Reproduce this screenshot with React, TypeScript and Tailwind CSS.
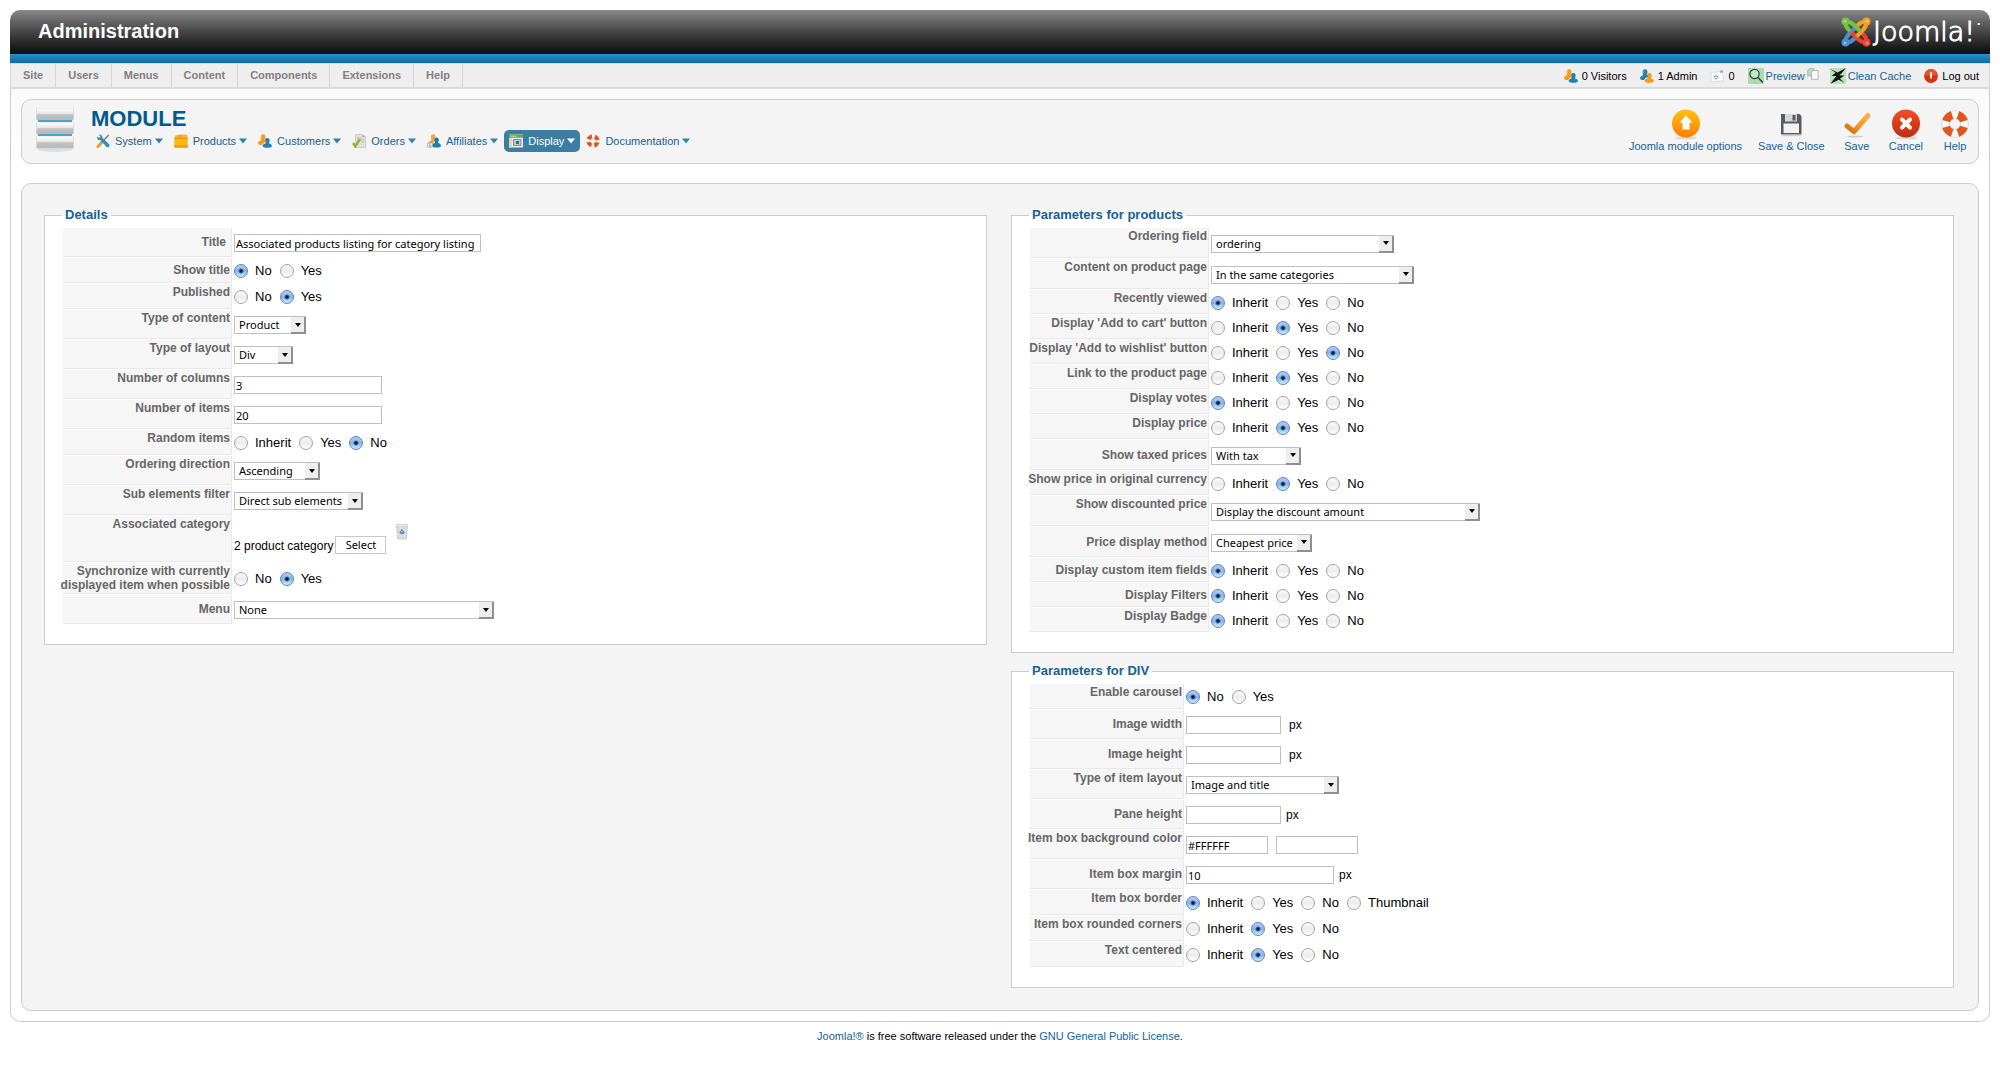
import React from 'react'
import clsx from 'clsx'

// --- Types ---
type Control =
  | { kind: 'radio'; options: string[]; value: string }
  | { kind: 'select'; value: string; width: string }
  | { kind: 'text'; value: string; width: string; unit?: string; wideUnit?: boolean }
  | { kind: 'colors'; value: string }
  | { kind: 'category' }

interface Field {
  label: string
  row: string
  control: Control
  middle?: boolean
}

interface PanelProps {
  title: string
  labelWidth: string
  fields: Field[]
}

const YES_NO = ['No', 'Yes']
const INHERIT = ['Inherit', 'Yes', 'No']

const radio = (value: string, options: string[] = INHERIT): Control => ({ kind: 'radio', options, value })
const select = (value: string, width: string): Control => ({ kind: 'select', value, width })

// --- Data ---
const DETAILS: Field[] = [
  { label: 'Title', row: 'h-[30px]', middle: true, control: { kind: 'text', value: 'Associated products listing for category listing', width: 'w-[247px]' } },
  { label: 'Show title', row: 'h-[26px]', middle: true, control: radio('No', YES_NO) },
  { label: 'Published', row: 'h-[26px]', control: radio('Yes', YES_NO) },
  { label: 'Type of content', row: 'h-[30px]', control: select('Product', 'w-[72px]') },
  { label: 'Type of layout', row: 'h-[30px]', control: select('Div', 'w-[59px]') },
  { label: 'Number of columns', row: 'h-[30px]', control: { kind: 'text', value: '3', width: 'w-[148px]' } },
  { label: 'Number of items', row: 'h-[30px]', control: { kind: 'text', value: '20', width: 'w-[148px]' } },
  { label: 'Random items', row: 'h-[26px]', control: radio('No') },
  { label: 'Ordering direction', row: 'h-[30px]', control: select('Ascending', 'w-[86px]') },
  { label: 'Sub elements filter', row: 'h-[30px]', control: select('Direct sub elements', 'w-[129px]') },
  { label: 'Associated category', row: 'h-[47px]', control: { kind: 'category' } },
  { label: 'Synchronize with currently\ndisplayed item when possible', row: 'h-8', middle: true, control: radio('Yes', YES_NO) },
  { label: 'Menu', row: 'h-[30px]', middle: true, control: select('None', 'w-[260px]') },
]

const PRODUCTS: Field[] = [
  { label: 'Ordering field', row: 'h-[31px]', control: select('ordering', 'w-[183px]') },
  { label: 'Content on product page', row: 'h-[31px]', control: select('In the same categories', 'w-[203px]') },
  { label: 'Recently viewed', row: 'h-[25px]', control: radio('Inherit') },
  { label: "Display 'Add to cart' button", row: 'h-[25px]', control: radio('Yes') },
  { label: "Display 'Add to wishlist' button", row: 'h-[25px]', control: radio('No') },
  { label: 'Link to the product page', row: 'h-[25px]', control: radio('Yes') },
  { label: 'Display votes', row: 'h-[25px]', control: radio('Inherit') },
  { label: 'Display price', row: 'h-[25px]', control: radio('Yes') },
  { label: 'Show taxed prices', row: 'h-[31px]', middle: true, control: select('With tax', 'w-[90px]') },
  { label: 'Show price in original currency', row: 'h-[25px]', control: radio('Yes') },
  { label: 'Show discounted price', row: 'h-[31px]', control: select('Display the discount amount', 'w-[269px]') },
  { label: 'Price display method', row: 'h-[31px]', middle: true, control: select('Cheapest price', 'w-[101px]') },
  { label: 'Display custom item fields', row: 'h-[25px]', middle: true, control: radio('Inherit') },
  { label: 'Display Filters', row: 'h-[25px]', middle: true, control: radio('Inherit') },
  { label: 'Display Badge', row: 'h-[25px]', control: radio('Inherit') },
]

const DIV_PARAMS: Field[] = [
  { label: 'Enable carousel', row: 'h-[26px]', control: radio('No', YES_NO) },
  { label: 'Image width', row: 'h-[30px]', middle: true, control: { kind: 'text', value: '', width: 'w-[95px]', unit: 'px', wideUnit: true } },
  { label: 'Image height', row: 'h-[30px]', middle: true, control: { kind: 'text', value: '', width: 'w-[95px]', unit: 'px', wideUnit: true } },
  { label: 'Type of item layout', row: 'h-[30px]', control: select('Image and title', 'w-[153px]') },
  { label: 'Pane height', row: 'h-[30px]', middle: true, control: { kind: 'text', value: '', width: 'w-[95px]', unit: 'px' } },
  { label: 'Item box background color', row: 'h-[30px]', control: { kind: 'colors', value: '#FFFFFF' } },
  { label: 'Item box margin', row: 'h-[30px]', middle: true, control: { kind: 'text', value: '10', width: 'w-[148px]', unit: 'px' } },
  { label: 'Item box border', row: 'h-[26px]', control: radio('Inherit', ['Inherit', 'Yes', 'No', 'Thumbnail']) },
  { label: 'Item box rounded corners', row: 'h-[26px]', control: radio('Yes') },
  { label: 'Text centered', row: 'h-[26px]', control: radio('Yes') },
]

// --- Icons ---
const UsersIcon = ({ back = '#1f83ad', front = '#f59a1c' }: { back?: string; front?: string }) => (
  <svg viewBox="0 0 14 14" className="size-[14px] shrink-0">
    <path d="M9.300 4c1.700 0 2.500 1.200 2.400 2.800-.1 1-.5 1.700-.8 2.200.1.900 3 .9 3 2.700 0 1.400-1.700 2-4.600 2s-4.600-.6-4.600-2c0-1.800 2.900-1.900 3-2.700-.3-.5-.7-1.200-.8-2.200C6.800 5.200 7.600 4 9.300 4z" fill={back} />
    <path d="M5 .2c1.800 0 2.600 1.200 2.500 2.900-.1 1.100-.5 1.800-.9 2.400.1.600.9.8 1.600 1.300C7.800 8.800 5 8.600 4.300 11 1.800 11.200 0 10.700 0 9.300c0-2.100 3.100-2.500 3.300-3.800-.4-.6-.7-1.300-.8-2.400C2.400 1.400 3.300.2 5 .2z" fill={front} />
    <path d="M4 1.300c-.8.6-.7 1.700-.4 2.500" stroke="#fff" strokeOpacity=".5" strokeWidth=".8" fill="none" />
  </svg>
)

const ToolsIcon = () => (
  <svg viewBox="0 0 14 14" className="size-[14px] shrink-0">
    <path d="M12.800 1L8.200 5.800" stroke="#777" strokeWidth="1.400" />
    <path d="M7.200 6.500L2 12.600" stroke="#f0992b" strokeWidth="3" strokeLinecap="round" />
    <path d="M1.200 2.400L3 4l1.500-1.600L3 .7C4.700.2 6.500 1.500 6.300 3.700l6.800 6.600c1.200 1.800-1 3.800-2.600 2.500L4.200 6C2.300 6.500.5 4.900 1.200 2.400z" fill="#2a8fc4" />
  </svg>
)

const BoxIcon = () => (
  <svg viewBox="0 0 14 14" className="size-[14px] shrink-0">
    <path d="M1 1.500L6 .5h6l1.500 1V5H.5z" fill="#f9b233" />
    <path d="M.3 4.200h13.400v9.500H.3z" fill="#fdb813" />
    <path d="M.3 11h13.400v2.700H.3z" fill="#f79d0c" />
    <path d="M.3 4.300h13.400M6 .8V4" stroke="#d98306" strokeWidth=".7" />
  </svg>
)

const OrdersIcon = () => (
  <svg viewBox="0 0 14 14" className="size-[14px] shrink-0">
    <path d="M3.500.5h7L13.500 3v10.500h-10z" fill="#e0e0e0" stroke="#b8b8b8" strokeWidth=".6" />
    <path d="M10.500.5V3h3z" fill="#aaa" />
    <path d="M5 4h5M5 6h7M9 8h3" stroke="#b0b0b0" strokeWidth=".7" />
    <path d="M1 9l2.200 3.500L8 5" fill="none" stroke="#84bd2e" strokeWidth="2.400" />
  </svg>
)

const AffiliatesIcon = () => (
  <svg viewBox="0 0 14 14" className="size-[14px] shrink-0">
    <path d="M6 .3c1.800 0 2.600 1.100 2.400 3-.3 1.700-.8 2-.6 2.700L5 10.500 2.500 8.500c0-2 2-2 1.900-3.300C3.600 3.200 3.800.3 6 .3z" fill="#f2a443" />
    <path d="M9.500 3.500c1.700 0 2.400 1.200 2.300 2.800-.1 1.100-.6 1.700-.7 2.300 0 .8 2.800.9 2.800 3.100 0 1.400-1.700 1.900-4.200 1.900-2.800 0-4.500-.5-4.500-1.900 0-2.200 2.800-2.300 2.800-3.100-.2-.6-.6-1.200-.7-2.300-.1-1.600.6-2.800 2.200-2.800z" fill="#1c7fa9" />
    <circle cx="3" cy="10.800" r="2.700" fill="#f5f5f5" stroke="#888" strokeWidth=".7" />
    <path d="M3 9v.8M3 10.300v2" stroke="#555" strokeWidth=".9" />
  </svg>
)

const DisplayIcon = () => (
  <svg viewBox="0 0 14 14" className="size-[14px] shrink-0">
    <path d="M0 .5h14v13H0z" fill="#f3ede2" />
    <path d="M0 .5h14v3.300H0z" fill="#5fae57" />
    <path d="M1.500 2.200h6" stroke="#d6efd2" strokeWidth=".8" />
    <path d="M0 4h3v9.500H0z" fill="#e6d3bd" />
    <path d="M4.500 5.500h7.500v6H4.500z" fill="#9ad3ea" stroke="#d9583a" strokeWidth=".8" />
    <path d="M7 7h3v3H7z" fill="#2f6d99" />
  </svg>
)

const LifeRing = ({ className }: { className: string }) => (
  <svg viewBox="0 0 28 28" className={className}>
    <circle cx="14" cy="14" r="9.500" fill="none" stroke="#fafafa" strokeWidth="8" />
    <circle cx="14" cy="14" r="13.400" fill="none" stroke="#d0d0d0" strokeWidth=".7" />
    <circle cx="14" cy="14" r="5.400" fill="none" stroke="#c4c4c4" strokeWidth=".7" />
    <circle
      cx="14"
      cy="14"
      r="9.400"
      fill="none"
      stroke="#e0561e"
      strokeWidth="8"
      pathLength="80"
      strokeDasharray="12 8"
      strokeDashoffset="-4"
    />
  </svg>
)

const ModuleIcon = () => (
  <svg viewBox="0 0 40 48" className="h-12 w-10 shrink-0">
    <defs>
      <linearGradient id="slab" x1="0" y1="0" x2="0" y2="1">
        <stop offset="0" stopColor="#ffffff" />
        <stop offset=".45" stopColor="#e9e9ea" />
        <stop offset=".55" stopColor="#c4c5c7" />
        <stop offset="1" stopColor="#b5b6b8" />
      </linearGradient>
    </defs>
    <ellipse cx="20" cy="41" rx="18" ry="3" fill="#dedede" />
    <path d="M3 10h34v22H3z" fill="#1a9ad6" />
    <rect x="1.500" y="0" width="37" height="12" rx="1" fill="url(#slab)" stroke="#c9c9c9" strokeWidth=".5" />
    <rect x="1.500" y="14" width="37" height="12" rx="1" fill="url(#slab)" stroke="#c9c9c9" strokeWidth=".5" />
    <rect x="1.500" y="28" width="37" height="12" rx="1" fill="url(#slab)" stroke="#c9c9c9" strokeWidth=".5" />
  </svg>
)

const MailIcon = () => (
  <svg viewBox="0 0 14 14" className="size-[14px] shrink-0">
    <path d="M1 3.500l11.500-1L13.500 12 1 12.800z" fill="#f7f9fa" stroke="#cdd3d6" strokeWidth=".6" />
    <path d="M10 1.300h3v2.500h-3z" fill="#8fb9d4" />
    <path d="M4 8c1-1.500 3-1.500 4 .2M4.500 9c1 1.200 2.500 1 3.500-.6" stroke="#4d8db5" fill="none" strokeWidth="1" />
  </svg>
)

const SearchIcon = () => (
  <svg viewBox="0 0 16 16" className="size-4 shrink-0">
    <rect width="16" height="16" rx="1" fill="#abdcb0" />
    <circle cx="6.500" cy="6" r="4.600" fill="#c4e6c8" stroke="#2f3d33" strokeWidth="1.200" />
    <path d="M10 9.500l4.800 5" stroke="#2f3d33" strokeWidth="1.500" />
  </svg>
)

const PagesIcon = () => (
  <svg viewBox="0 0 12 12" className="size-3 shrink-0 self-start">
    <path d="M.7 2.500L2.500.7h4.300v7H.7z" fill="#b9dcbf" stroke="#93a796" strokeWidth=".7" />
    <path d="M4.500 4.300l1.800-1.800h4.800v8.800H4.500z" fill="#fafafa" stroke="#9d9d9d" strokeWidth=".7" />
  </svg>
)

const BoltIcon = () => (
  <svg viewBox="0 0 16 16" className="size-4 shrink-0">
    <rect width="16" height="16" rx="1" fill="#b7e5b9" />
    <path d="M0 .8l7.500 3.700L15.800 0 11.500 5.500 9.300 7.300l5 .2-4.300 3.200 4.500 4-5.700-2.900L.5 15.800l4-5.600L6.500 8 1.500 8l4-3.300z" fill="#151515" />
  </svg>
)

const LogoutIcon = () => (
  <svg viewBox="0 0 14 14" className="size-[14px] shrink-0">
    <circle cx="7" cy="7" r="6.900" fill="#d6300f" />
    <path d="M1 6a6 6 0 0 1 12 0c-4 1.500-8 1.500-12 0z" fill="#e9532f" />
    <path d="M7 3.300v6.200" stroke="#fff" strokeWidth="1.800" />
  </svg>
)

const OptionsIcon = () => (
  <svg viewBox="0 0 32 30" className="h-[30px] w-8 overflow-visible">
    <defs>
      <linearGradient id="amber" x1="0" y1="0" x2="0" y2="1">
        <stop offset="0" stopColor="#ffc20e" />
        <stop offset="1" stopColor="#fd7e00" />
      </linearGradient>
    </defs>
    <ellipse cx="16" cy="29" rx="11" ry="1.300" fill="#d8d8d8" />
    <circle cx="16" cy="14.500" r="14" fill="url(#amber)" />
    <path d="M16 6.500l6.500 7h-3v7h-7v-7h-3z" fill="#fff" />
  </svg>
)

const FloppyIcon = () => (
  <svg viewBox="0 0 32 30" className="h-[30px] w-8 overflow-visible">
    <path d="M6 5h18.500l2 2v18.500H6z" fill="#5a5b5e" />
    <path d="M10 5h12v7.500H10z" fill="#d5d6d8" />
    <path d="M17.500 6h3v5.500h-3z" fill="#5a5b5e" />
    <path d="M8.500 14.500H24V24H8.500z" fill="#f2f2f2" />
    <path d="M7 26.500h19" stroke="#cfcfcf" strokeWidth="1.500" />
  </svg>
)

const CheckIcon = () => (
  <svg viewBox="0 0 32 30" className="h-[30px] w-8 overflow-visible">
    <defs>
      <linearGradient id="tick" x1="0" y1="1" x2="1" y2="0">
        <stop offset="0" stopColor="#c9730d" />
        <stop offset=".5" stopColor="#f59a23" />
        <stop offset="1" stopColor="#fbb04a" />
      </linearGradient>
    </defs>
    <ellipse cx="14" cy="27.500" rx="8" ry="1" fill="#cfcfcf" />
    <path d="M6 17l7 5.500L27 6.500" fill="none" stroke="url(#tick)" strokeWidth="5" strokeLinecap="round" strokeLinejoin="round" />
  </svg>
)

const CancelIcon = () => (
  <svg viewBox="0 0 32 30" className="h-[30px] w-8 overflow-visible">
    <defs>
      <linearGradient id="cancel" x1="0" y1="0" x2="0" y2="1">
        <stop offset="0" stopColor="#f0512a" />
        <stop offset=".5" stopColor="#dc3a16" />
        <stop offset="1" stopColor="#bd2f14" />
      </linearGradient>
    </defs>
    <ellipse cx="16" cy="29" rx="11" ry="1.300" fill="#d8d8d8" />
    <circle cx="16" cy="14.500" r="14" fill="url(#cancel)" />
    <path d="M12 10.500l8 8m0-8l-8 8" stroke="#fff" strokeWidth="4" strokeLinecap="round" />
  </svg>
)

const TrashIcon = () => (
  <svg viewBox="0 0 12 16" className="h-4 w-3">
    <path d="M.5 1h11L10.500 15h-9z" fill="#dcdcdc" stroke="#bbb" strokeWidth=".6" />
    <path d="M.3.6h11.400v1.800H.3z" fill="#f3f3f3" stroke="#bbb" strokeWidth=".5" />
    <path d="M4 8.500L6 5.700l2 2.800zM4.300 9.500h3.400" stroke="#5b85d6" strokeWidth="1.100" fill="none" />
  </svg>
)

// One arm pair per corner, turned a quarter for each colour
const MARK_COLORS = [
  { color: '#4a8fd0', light: '#8cbbe8', turn: 'rotate(270 15 15)' },
  { color: '#ee4136', light: '#f68c84', turn: 'rotate(180 15 15)' },
  { color: '#f79f22', light: '#fbc878', turn: 'rotate(90 15 15)' },
  { color: '#7ac143', light: '#a9da82', turn: 'rotate(0 15 15)' },
]

const JoomlaMark = () => (
  <svg viewBox="0 0 30 30" className="size-[30px]">
    {MARK_COLORS.map(({ color, light, turn }) => (
      <g key={color} transform={turn}>
        <path
          d="M4.500 4.500c3.500-.2 6.300 1.300 8.500 3.500l6.500 6.500M4.500 4.500c-.2 3.500 1 6 3 8l1.500 1.500"
          fill="none"
          stroke={color}
          strokeWidth="4"
        />
        <circle cx="4.500" cy="4.500" r="4" fill={color} />
        <circle cx="4" cy="4" r="1.500" fill={light} />
      </g>
    ))}
  </svg>
)

const Caret = ({ className }: { className: string }) => (
  <svg viewBox="0 0 8 6" className={clsx('ml-[3px] h-1.5 w-2', className)}>
    <path d="M0 .5h8L4 5.500z" fill="currentColor" />
  </svg>
)

// --- Form controls ---
const inputClass =
  'h-[18px] border border-[#c0c0c0] bg-white px-px text-[11px] leading-4 text-black outline-none [font-family:"Noto_Sans",sans-serif]'

const SelectBox = ({ id, value, width }: { id: string; value: string; width: string }) => (
  <span className={clsx('relative inline-block h-[18px]', width)}>
    <select
      id={id}
      defaultValue={value}
      className='block h-[18px] w-full appearance-none border border-[#c0c0c0] bg-white pl-1 text-[11px] leading-4 text-black outline-none [font-family:"Noto_Sans",sans-serif]'
    >
      <option>{value}</option>
    </select>
    <span className="pointer-events-none absolute right-0 top-px flex h-[17px] w-[15px] items-center justify-center border-b-2 border-r-2 border-[#8f8f8f] bg-[#eeeeee]">
      <svg viewBox="0 0 6 4" className="h-1 w-1.5">
        <path d="M0 0h6L3 4z" fill="#000" />
      </svg>
    </span>
  </span>
)

const RadioGroup = ({ id, options, value }: { id: string; options: string[]; value: string }) => (
  <div role="radiogroup" aria-labelledby={`${id}-label`} className="flex items-center gap-2">
    {options.map((option) => (
      <label key={option} className="flex items-center gap-[7px] text-[13px] leading-4 text-black">
        <input
          type="radio"
          name={id}
          defaultChecked={option === value}
          className="size-[14px] appearance-none rounded-full border border-[#a3a3a3] bg-linear-to-b from-[#fafafa] via-[#ececec] to-white checked:border-[#6b7fb5] checked:bg-[radial-gradient(circle,#0b1a33_0,#0b1a33_1px,transparent_3px),linear-gradient(#b5cdf2,#7fb6f0_50%,#c3f0ff)]"
        />
        {option}
      </label>
    ))}
  </div>
)

const FieldControl = ({ id, control }: { id: string; control: Control }) => {
  switch (control.kind) {
    case 'radio':
      return <RadioGroup id={id} options={control.options} value={control.value} />
    case 'select':
      return <SelectBox id={id} value={control.value} width={control.width} />
    case 'text':
      return (
        <div className={clsx('flex items-center text-xs', control.wideUnit ? 'gap-2' : 'gap-[5px]')}>
          <input id={id} type="text" defaultValue={control.value} className={clsx(inputClass, control.width)} />
          {control.unit}
        </div>
      )
    case 'colors':
      return (
        <div className="flex items-center gap-2">
          <input id={id} type="text" defaultValue={control.value} className={clsx(inputClass, 'w-[82px]')} />
          <input type="text" aria-label="Color preview" className={clsx(inputClass, 'w-[82px]')} />
        </div>
      )
    case 'category':
      return (
        <div className="flex items-end pb-px text-xs">
          <span>2 product category</span>
          <button
            id={id}
            type="button"
            className='ml-0.5 mt-3 h-[18px] w-[51px] border border-[#c8c8c8] bg-white text-[11px] leading-4 [font-family:"Noto_Sans",sans-serif]'
          >
            Select
          </button>
          <button type="button" aria-label="Delete" className="mb-3.5 ml-2.5">
            <TrashIcon />
          </button>
        </div>
      )
  }
}

const Panel: React.FC<PanelProps> = ({ title, labelWidth, fields }) => (
  <fieldset className="min-w-0 border border-[#cccccc] bg-white pb-[19px] pl-[17px]">
    <legend className="px-[3px] text-[13px] font-bold leading-4 text-[#146295]">{title}</legend>
    <div className="pl-px pt-[5px]">
      {fields.map((field) => {
        const id = field.label.toLowerCase().replace(/[^a-z]+/g, '-')
        const labelClass = clsx('whitespace-pre text-right text-xs font-bold leading-[14px] text-[#666666]', !field.middle && 'pt-px')
        return (
          <div key={id} className={clsx('flex gap-0.5', field.row)}>
            <div
              className={clsx(
                'mb-px flex shrink-0 justify-end border-b border-r border-[#e9e9e9] bg-[#f6f6f6] pr-px',
                field.middle ? 'items-center' : 'items-start',
                labelWidth,
              )}
            >
              {field.control.kind === 'radio' ? (
                <span id={`${id}-label`} className={labelClass}>
                  {field.label}
                </span>
              ) : (
                <label htmlFor={id} className={clsx(labelClass, field.label === 'Title' && 'pr-1')}>
                  {field.label}
                </label>
              )}
            </div>
            <div className="flex items-center">
              <FieldControl id={id} control={field.control} />
            </div>
          </div>
        )
      })}
    </div>
  </fieldset>
)

// --- Header bits ---
const MENU = ['Site', 'Users', 'Menus', 'Content', 'Components', 'Extensions', 'Help']

const SUBMENU = [
  { label: 'System', icon: <ToolsIcon /> },
  { label: 'Products', icon: <BoxIcon /> },
  { label: 'Customers', icon: <UsersIcon /> },
  { label: 'Orders', icon: <OrdersIcon /> },
  { label: 'Affiliates', icon: <AffiliatesIcon /> },
  { label: 'Display', icon: <DisplayIcon />, active: true },
  { label: 'Documentation', icon: <LifeRing className="size-[14px] shrink-0" /> },
]

const TOOLBAR = [
  { label: 'Joomla module options', icon: <OptionsIcon /> },
  { label: 'Save & Close', icon: <FloppyIcon /> },
  { label: 'Save', icon: <CheckIcon /> },
  { label: 'Cancel', icon: <CancelIcon /> },
  { label: 'Help', icon: <LifeRing className="mx-0.5 my-px size-7" /> },
]

const App: React.FC = () => {
  return (
    <div className='min-h-screen bg-white p-2.5 text-black [font-family:"Liberation_Sans",Arial,sans-serif]'>
      <header className="flex h-11 items-center justify-between rounded-t-[10px] bg-linear-to-b from-[#898989] to-[#0c0c0c] pl-7 pr-2.5">
        <h1 className="pb-0.5 text-xl font-bold leading-6 text-white">Administration</h1>
        <a href="#joomla" className="flex items-center gap-0.5 text-white">
          <JoomlaMark />
          <span className='text-[27px] font-extralight leading-8 [-webkit-text-stroke:1px_white] [font-family:"DejaVu_Sans",sans-serif]'>
            Joomla!
          </span>
          <span className="self-start text-[8px] leading-4">•</span>
        </a>
      </header>
      <div className="h-[9px] bg-linear-to-b from-[#2490c9] to-[#0d6ba3]" />

      <div className="flex items-center justify-between border border-b-2 border-[#d9d9d9] bg-[#eeeeee]">
        <nav className="flex">
          {MENU.map((item) => (
            <a key={item} href="#menu" className="border-r border-[#d4d4d4] px-3 text-[11px] font-bold leading-[23px] text-[#808080]">
              {item}
            </a>
          ))}
        </nav>
        <div className="flex items-center pr-2.5 text-[11px] leading-4">
          <span className="flex items-center gap-1">
            <UsersIcon />0 Visitors
          </span>
          <span className="ml-[13px] flex items-center gap-1">
            <UsersIcon back="#f59a1c" front="#1f83ad" />1 Admin
          </span>
          <span className="ml-[13px] flex items-center gap-1">
            <MailIcon />0
          </span>
          <a href="#preview" className="ml-[13px] flex items-center gap-0.5 text-[#146295]">
            <SearchIcon />
            <span>Preview</span>
            <PagesIcon />
          </a>
          <a href="#cache" className="ml-[11px] flex items-center gap-0.5 text-[#146295]">
            <BoltIcon />
            Clean Cache
          </a>
          <a href="#logout" className="ml-[13px] flex items-center gap-1">
            <LogoutIcon />
            Log out
          </a>
        </div>
      </div>

      <div className="rounded-b-[10px] border border-t-0 border-[#cccccc] bg-linear-to-b from-[#fafafa] to-white to-[80px] px-2.5 py-2.5">
        <section className="flex h-[65px] items-start justify-between rounded-[10px] border border-[#cccccc] bg-[#f4f4f4] pl-[13px] pr-[7px]">
          <div className="flex pt-2">
            <ModuleIcon />
            <div className="pl-4">
              <h2 className="text-[22px] font-bold leading-[22px] text-[#025a8d]">MODULE</h2>
              <nav className="flex gap-px">
                {SUBMENU.map(({ label, icon, active }) => (
                  <a
                    key={label}
                    href="#submenu"
                    className={clsx(
                      'flex h-[22px] items-center rounded-[5px] px-[5px] text-[11px]',
                      active ? 'bg-[#3a7fa3] text-white' : 'text-[#146295]',
                    )}
                  >
                    {icon}
                    <span className="ml-[5px]">{label}</span>
                    <Caret className={active ? 'text-white' : 'text-[#2f81ae]'} />
                  </a>
                ))}
              </nav>
            </div>
          </div>
          <div className="flex gap-4 pt-[9px]">
            {TOOLBAR.map(({ label, icon }) => (
              <button key={label} type="button" className="flex flex-col items-center text-[11px] leading-[14px] text-[#146295]">
                {icon}
                {label}
              </button>
            ))}
          </div>
        </section>

        <main className="mt-[19px] flex items-start gap-6 rounded-[10px] border border-[#cccccc] bg-[#f4f4f4] pb-[22px] pl-[22px] pr-6 pt-[23px]">
          <div className="min-w-0 flex-1">
            <Panel title="Details" labelWidth="w-[169px]" fields={DETAILS} />
          </div>
          <div className="flex min-w-0 flex-1 flex-col gap-2.5">
            <Panel title="Parameters for products" labelWidth="w-[179px]" fields={PRODUCTS} />
            <Panel title="Parameters for DIV" labelWidth="w-[154px]" fields={DIV_PARAMS} />
          </div>
        </main>
      </div>

      <footer className="pt-1.5 text-center text-[11px] leading-4">
        <a href="#joomla" className="text-[#146295]">
          Joomla!®
        </a>{' '}
        is free software released under the{' '}
        <a href="#gpl" className="text-[#146295]">
          GNU General Public License
        </a>
        .
      </footer>
    </div>
  )
}

export default App
